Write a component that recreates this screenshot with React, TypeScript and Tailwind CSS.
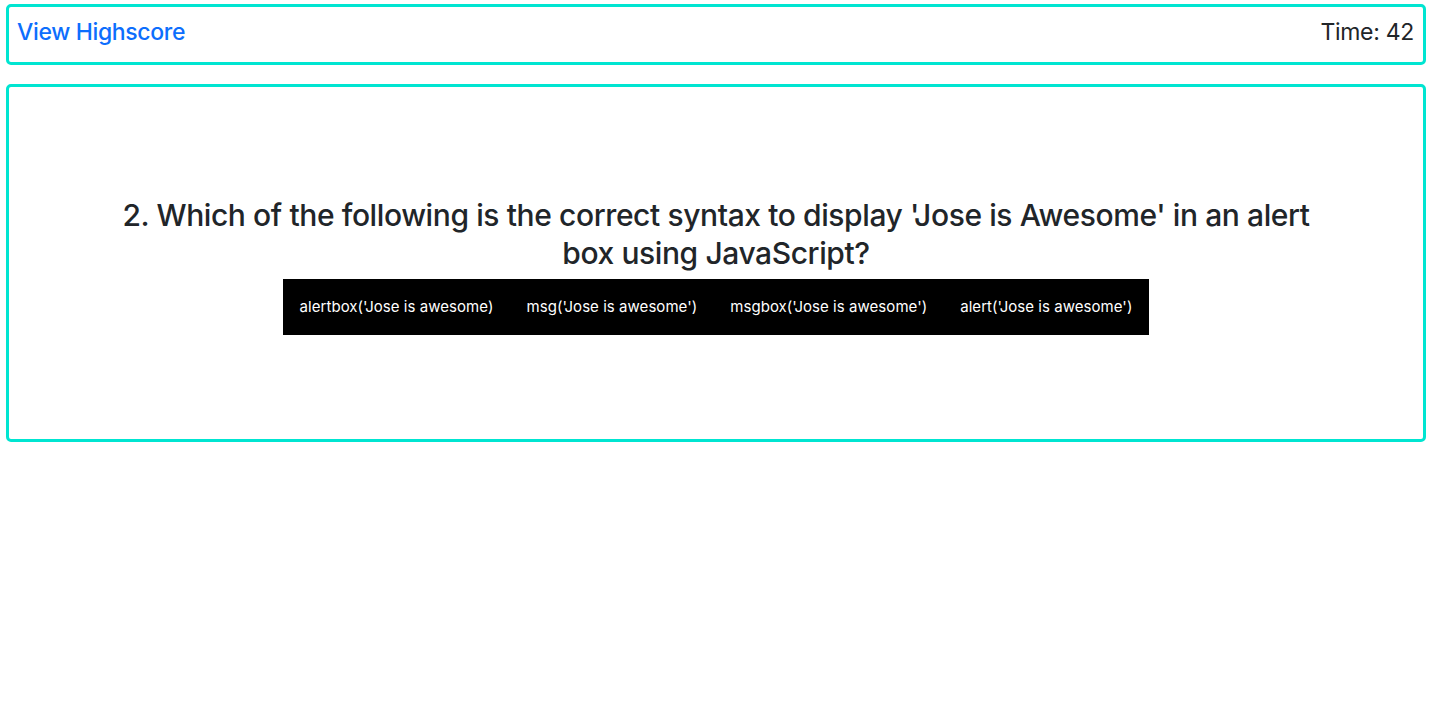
export default function App() {
  const answers = [
    "alertbox('Jose is awesome)",
    "msg('Jose is awesome')",
    "msgbox('Jose is awesome')",
    "alert('Jose is awesome')",
  ];

  return (
    <div className="min-h-[723px] bg-white pl-[6px] pr-[14px] pt-[4px] font-['Inter',sans-serif] text-[#212529]">
      <header className="flex h-[61px] items-center justify-between rounded-[5px] border-[3px] border-[#00e5d1] pl-[8px] pr-[9px] pb-[4px]">
        <a href="#" className="text-[23px] font-medium tracking-[-0.35px] text-[#0d6efd]">
          View Highscore
        </a>
        <span className="text-[23px] font-normal tracking-[-0.3px]">Time: 42</span>
      </header>

      <main className="mt-[19px] flex h-[358px] flex-col items-center justify-center rounded-[5px] border-[3px] border-[#00e5d1] pt-[4px]">
        <h2 className="w-[1200px] text-center text-[30px] leading-[38px] font-medium tracking-[-0.4px]">
          2. Which of the following is the correct syntax to display 'Jose is Awesome' in an alert box using JavaScript?
        </h2>
        <div className="mt-[7px] flex bg-black">
          {answers.map((a) => (
            <button
              key={a}
              className="px-[16.5px] py-[16px] text-[15px] leading-[24px] tracking-[0.05px] text-white"
            >
              {a}
            </button>
          ))}
        </div>
      </main>
    </div>
  );
}
